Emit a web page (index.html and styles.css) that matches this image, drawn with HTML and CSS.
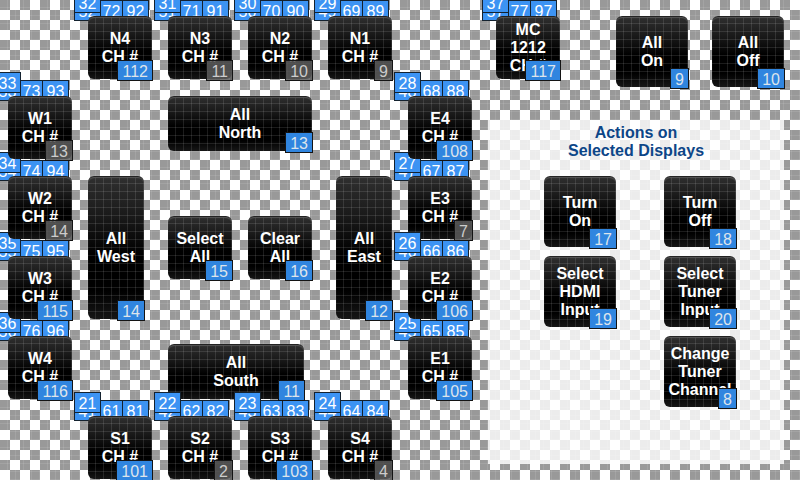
FILE: index.html
```
<!DOCTYPE html>
<html lang="en">
<head>
<meta charset="utf-8">
<title>Display Control</title>
<link rel="stylesheet" href="styles.css">
</head>
<body>
<main class="stage">
  <div class="node n4"><div class="tags"><span>72</span><span>92</span><span>52</span><span>32</span></div><button>N4<br>CH #</button><span class="badge">112</span></div>
  <div class="node n3"><div class="tags"><span>71</span><span>91</span><span>51</span><span>31</span></div><button>N3<br>CH #</button><span class="badge muted">11</span></div>
  <div class="node n2"><div class="tags"><span>70</span><span>90</span><span>50</span><span>30</span></div><button>N2<br>CH #</button><span class="badge muted">10</span></div>
  <div class="node n1"><div class="tags"><span>69</span><span>89</span><span>49</span><span>29</span></div><button>N1<br>CH #</button><span class="badge muted">9</span></div>
  <div class="node mc"><div class="tags"><span>77</span><span>97</span><span>57</span><span>37</span></div><button>MC<br>1212<br>CH #</button><span class="badge">117</span></div>
  <div class="node all-on"><button>All<br>On</button><span class="badge">9</span></div>
  <div class="node all-off"><button>All<br>Off</button><span class="badge">10</span></div>

  <div class="node w1"><div class="tags"><span>73</span><span>93</span><span>53</span><span>33</span></div><button>W1<br>CH #</button><span class="badge muted">13</span></div>
  <div class="node w2"><div class="tags"><span>74</span><span>94</span><span>54</span><span>34</span></div><button>W2<br>CH #</button><span class="badge muted">14</span></div>
  <div class="node w3"><div class="tags"><span>75</span><span>95</span><span>55</span><span>35</span></div><button>W3<br>CH #</button><span class="badge">115</span></div>
  <div class="node w4"><div class="tags"><span>76</span><span>96</span><span>56</span><span>36</span></div><button>W4<br>CH #</button><span class="badge">116</span></div>

  <div class="node north"><button>All<br>North</button><span class="badge">13</span></div>
  <div class="node west"><button>All<br>West</button><span class="badge">14</span></div>
  <div class="node select"><button>Select<br>All</button><span class="badge">15</span></div>
  <div class="node clear"><button>Clear<br>All</button><span class="badge">16</span></div>
  <div class="node east"><button>All<br>East</button><span class="badge">12</span></div>
  <div class="node south"><button>All<br>South</button><span class="badge">11</span></div>

  <div class="node e4"><div class="tags"><span>68</span><span>88</span><span>48</span><span>28</span></div><button>E4<br>CH #</button><span class="badge">108</span></div>
  <div class="node e3"><div class="tags"><span>67</span><span>87</span><span>47</span><span>27</span></div><button>E3<br>CH #</button><span class="badge muted">7</span></div>
  <div class="node e2"><div class="tags"><span>66</span><span>86</span><span>46</span><span class="raised">26</span></div><button>E2<br>CH #</button><span class="badge">106</span></div>
  <div class="node e1"><div class="tags"><span>65</span><span>85</span><span>45</span><span>25</span></div><button>E1<br>CH #</button><span class="badge">105</span></div>

  <div class="node s1"><div class="tags"><span>61</span><span>81</span><span>41</span><span>21</span></div><button>S1<br>CH #</button><span class="badge">101</span></div>
  <div class="node s2"><div class="tags"><span>62</span><span>82</span><span>42</span><span>22</span></div><button>S2<br>CH #</button><span class="badge muted">2</span></div>
  <div class="node s3"><div class="tags"><span>63</span><span>83</span><span>43</span><span>23</span></div><button>S3<br>CH #</button><span class="badge">103</span></div>
  <div class="node s4"><div class="tags"><span>64</span><span>84</span><span>44</span><span>24</span></div><button>S4<br>CH #</button><span class="badge muted">4</span></div>

  <section class="panel">
    <h2>Actions on<br>Selected Displays</h2>
    <div class="actions">
      <div class="node"><button>Turn<br>On</button><span class="badge">17</span></div>
      <div class="node"><button>Turn<br>Off</button><span class="badge">18</span></div>
      <div class="node"><button>Select<br>HDMI<br>Input</button><span class="badge">19</span></div>
      <div class="node"><button>Select<br>Tuner<br>Input</button><span class="badge">20</span></div>
      <div class="node change"><button>Change<br>Tuner<br>Channel</button><span class="badge">8</span></div>
    </div>
  </section>
</main>
</body>
</html>
```
FILE: styles.css
```
* { box-sizing: border-box; }

body {
  margin: 0;
  font-family: "Liberation Sans", Arial, sans-serif;
  font-size: 16px;
  line-height: 18px;
  background: repeating-conic-gradient(#fff 0 25%, #999 0 50%) 0 0 / 20px 20px;
}

/* Controls snap to an 8px design grid. */
.stage {
  display: grid;
  grid-template-columns: repeat(100, minmax(0, 1fr));
  grid-template-rows: repeat(60, 8px);
  overflow: hidden;
  background:
    linear-gradient(90deg, transparent 7px, rgba(255, 255, 255, .1) 7px) 0 0 / 8px 8px,
    linear-gradient(transparent 7px, rgba(255, 255, 255, .1) 7px) 0 0 / 8px 8px;
}

.node {
  position: relative;
  display: flex;
  padding-bottom: 1px;
  grid-row-end: span 8;
  grid-column-end: span 8;
}

button {
  position: relative;
  z-index: 2;
  flex: 1;
  min-width: 0;
  padding: 0;
  border: 0;
  border-radius: 6px;
  color: #fff;
  font: bold 16px/18px "Liberation Sans", Arial, sans-serif;
  white-space: nowrap;
  background:
    linear-gradient(90deg, transparent 7px, rgba(255, 255, 255, .11) 7px) 0 0 / 8px 8px,
    linear-gradient(transparent 7px, rgba(255, 255, 255, .11) 7px) 0 0 / 8px 8px,
    linear-gradient(#303030, #181818 30%, #000 55%, #000 80%, #161616);
  box-shadow: inset 0 1px #222, inset 0 2px 1px #555;
}

.south button { z-index: 0; }

.badge {
  position: absolute;
  z-index: 4;
  right: -1px;
  bottom: -1px;
  padding: 2px 4px 0;
  border: 1px solid #141414;
  line-height: 17px;
  color: #dde4ec;
  background: #3085df;
}

.muted {
  color: #ccc;
  background: rgba(92, 92, 92, .85);
}

.tags {
  position: absolute;
  top: -24px;
  left: -14px;
  display: grid;
  grid-template-columns: 24px 24px 27px;
  grid-template-rows: 8px 21px;
}

.tags span {
  position: relative;
  z-index: 1;
  grid-area: 2 / 2;
  width: 27px;
  height: 21px;
  padding-top: 2px;
  border: 1px solid #14222f;
  line-height: 17px;
  text-align: center;
  color: #fff;
  background: #3c93f3;
}

.tags span:nth-child(2) { grid-area: 2 / 3; }
.tags span:nth-child(3) { grid-area: 2 / 1; }
.tags span:nth-child(4) { grid-area: 1 / 1; }
.tags .raised { z-index: 3; }

.n4, .n3, .n2, .n1, .mc, .all-on, .all-off { grid-row-start: 3; }
.n4, .s1, .west { grid-column-start: 12; }
.n3, .s2, .north, .select, .south { grid-column-start: 22; }
.n2, .s3, .clear { grid-column-start: 32; }
.n1, .s4 { grid-column-start: 42; }
.w1, .w2, .w3, .w4 { grid-column-start: 2; }
.e1, .e2, .e3, .e4 { grid-column-start: 52; }
.w1, .e4, .north { grid-row-start: 13; }
.w2, .e3, .west, .east { grid-row-start: 23; }
.w3, .e2 { grid-row-start: 33; }
.w4, .e1 { grid-row-start: 43; }
.s1, .s2, .s3, .s4 { grid-row-start: 53; }
.select, .clear { grid-row-start: 28; }
.mc { grid-column-start: 63; }

.all-on, .all-off { grid-row-end: span 9; grid-column-end: span 9; }
.all-on { grid-column-start: 78; }
.all-off { grid-column-start: 90; }

.north { grid-row-end: span 7; grid-column-end: span 18; }
.south { grid-row: 44 / span 7; grid-column-end: span 17; }
.west, .east { grid-row-end: span 18; grid-column-end: span 7; }
.east { grid-column-start: 43; }

.panel {
  grid-area: 16 / 62 / span 43 / span 37;
  padding-top: 4px;
  background: rgba(255, 255, 255, .81);
}

.panel h2 {
  margin: 0;
  font-size: 16px;
  line-height: 18px;
  text-align: center;
  color: #0d4688;
}

.actions {
  display: grid;
  grid-template-columns: 1fr 1fr;
  grid-auto-rows: 72px;
  gap: 8px 48px;
  padding: 16px 48px 0 56px;
}

.actions .node { grid-area: auto; }
.actions .change { grid-column: 2; }
```
